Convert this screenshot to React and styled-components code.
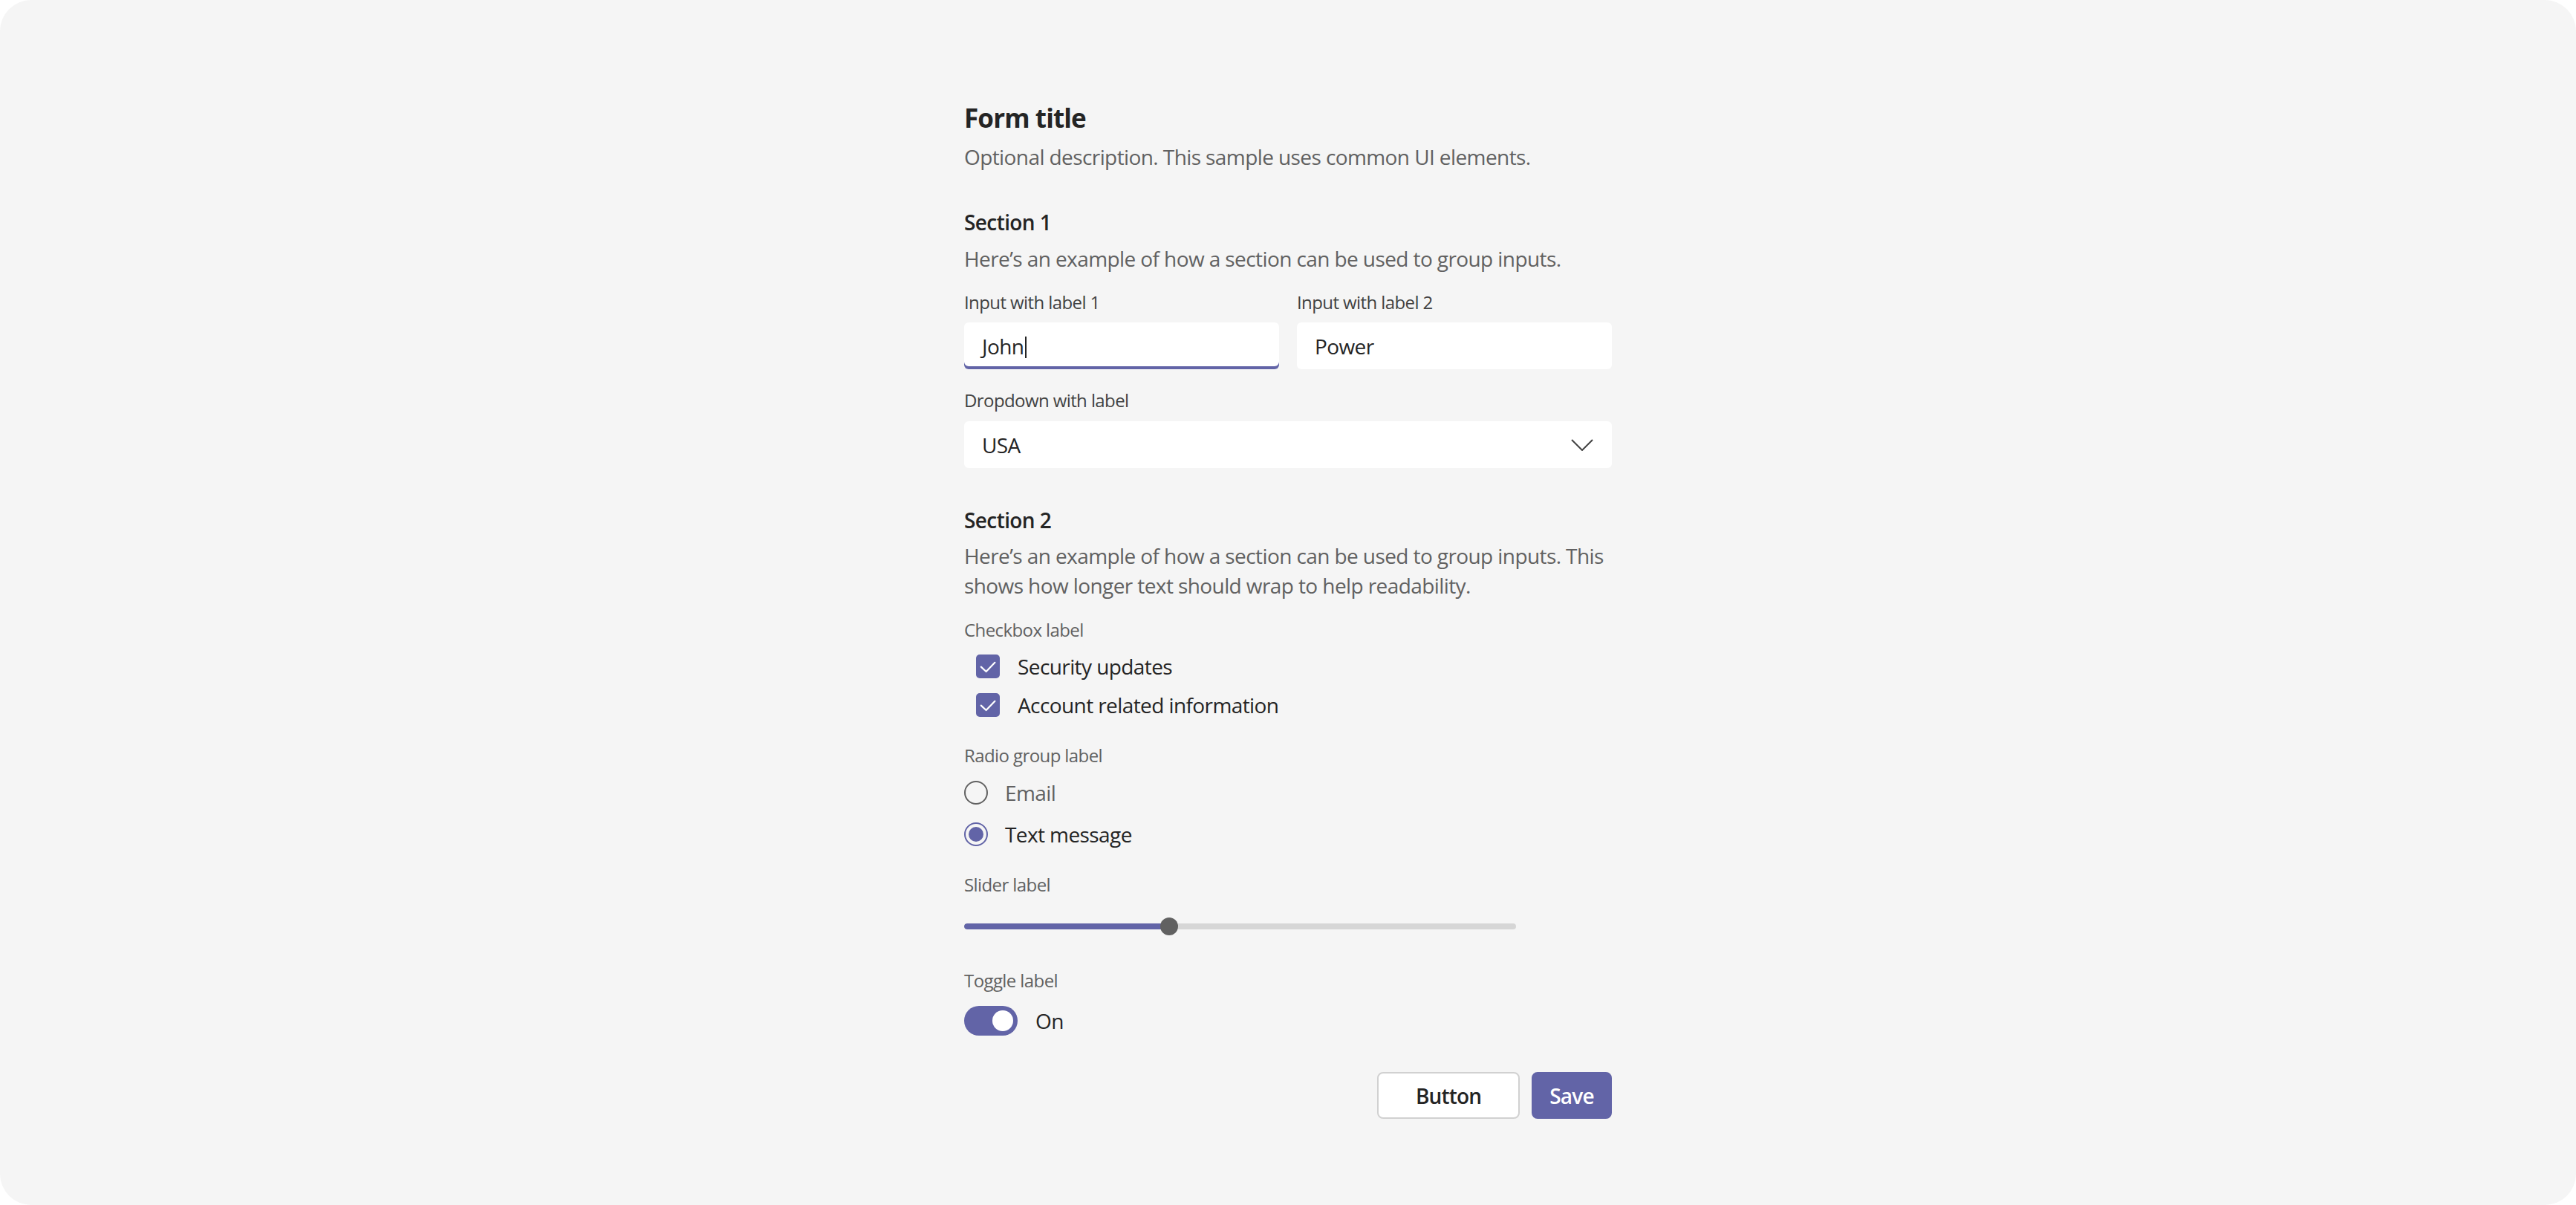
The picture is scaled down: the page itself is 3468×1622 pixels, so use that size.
import React from "react";
import styled, { createGlobalStyle } from "styled-components";

const GlobalStyle = createGlobalStyle`
  html, body { margin: 0; padding: 0; background: #ffffff; }
  body { font-family: "Segoe UI", "Open Sans", "Noto Sans", sans-serif; }
  *, *::before, *::after { box-sizing: border-box; }
`;

const PURPLE = "#6264a7";

const Page = styled.div`
  width: 100vw;
  height: 100vh;
  background: #ffffff;
`;

const Panel = styled.main`
  height: 100%;
  background: #f5f5f5;
  border-radius: 42px;
  display: flex;
  justify-content: center;
  padding-top: 135px;
`;

const Form = styled.form`
  width: 872px;
  display: flex;
  flex-direction: column;
  letter-spacing: -0.037em;
`;

const Title = styled.h1`
  margin: 0;
  font-size: 35px;
  line-height: 48px;
  font-weight: 700;
  color: #242424;
  letter-spacing: -0.025em;
`;

const Text = styled.p`
  margin: ${(p) => p.$mt || 0}px 0 0;
  font-size: 28px;
  line-height: 40px;
  color: #616161;
`;

const SectionTitle = styled.h2`
  margin: ${(p) => p.$mt || 0}px 0 0;
  font-size: 28px;
  line-height: 40px;
  font-weight: 600;
  color: #242424;
`;

const Group = styled.div`
  display: flex;
  flex-direction: column;
  margin-top: ${(p) => p.$mt || 0}px;
`;

const FieldRow = styled.div`
  display: grid;
  grid-template-columns: 1fr 1fr;
  column-gap: 24px;
  margin-top: ${(p) => p.$mt || 0}px;
`;

const Label = styled.label`
  display: block;
  font-size: 24px;
  line-height: 32px;
  color: ${(p) => (p.$muted ? "#616161" : "#424242")};
`;

const InputBox = styled.div`
  height: 63px;
  margin-top: ${(p) => p.$mt || 0}px;
  background: #ffffff;
  border-radius: 6px;
  padding: 0 25px 0 24px;
  display: flex;
  align-items: center;
  justify-content: space-between;
  font-size: 28px;
  color: #242424;
  box-shadow: ${(p) => (p.$focused ? `inset 0 -4px 0 ${PURPLE}` : "none")};
`;

const Caret = styled.span`
  display: inline-block;
  width: 2px;
  height: 29px;
  background: #242424;
  margin-left: 2px;
  vertical-align: -5px;
`;

const List = styled.div`
  display: flex;
  flex-direction: column;
  gap: ${(p) => p.$gap}px;
  margin-top: ${(p) => p.$mt}px;
`;

const OptionRow = styled.div`
  height: 40px;
  display: flex;
  align-items: center;
  gap: ${(p) => p.$gap || 24}px;
  padding-left: ${(p) => p.$indent || 0}px;
  font-size: 28px;
  color: ${(p) => (p.$dim ? "#616161" : "#242424")};
`;

const CheckBox = styled.span`
  width: 32px;
  height: 32px;
  border-radius: 5px;
  background: ${PURPLE};
  display: flex;
  align-items: center;
  justify-content: center;
  flex: none;
`;

const Radio = styled.span`
  width: 32px;
  height: 32px;
  border-radius: 50%;
  border: 2px solid ${(p) => (p.$checked ? PURPLE : "#616161")};
  display: flex;
  align-items: center;
  justify-content: center;
  flex: none;
  &::after {
    content: "";
    display: ${(p) => (p.$checked ? "block" : "none")};
    width: 20px;
    height: 20px;
    border-radius: 50%;
    background: ${PURPLE};
  }
`;

const SliderWrap = styled.div`
  position: relative;
  width: 743px;
  height: 40px;
  margin-top: 20px;
  display: flex;
  align-items: center;
`;

const Track = styled.div`
  width: 100%;
  height: 8px;
  border-radius: 4px;
  background: #d6d6d6;
  overflow: hidden;
`;

const Fill = styled.div`
  height: 100%;
  background: ${PURPLE};
  border-radius: 4px;
`;

const Thumb = styled.span`
  position: absolute;
  top: 8px;
  width: 24px;
  height: 24px;
  margin-left: -12px;
  border-radius: 50%;
  background: #616161;
`;

const ToggleRow = styled.div`
  display: flex;
  align-items: center;
  gap: 24px;
  height: 40px;
  margin-top: 18px;
  font-size: 28px;
  color: #242424;
`;

const Toggle = styled.span`
  width: 72px;
  height: 40px;
  border-radius: 20px;
  background: ${PURPLE};
  display: flex;
  align-items: center;
  justify-content: flex-end;
  padding: 0 6px;
`;

const Knob = styled.span`
  width: 28px;
  height: 28px;
  border-radius: 50%;
  background: #ffffff;
`;

const ButtonRow = styled.div`
  display: flex;
  justify-content: flex-end;
  gap: 16px;
  margin-top: 49px;
`;

const Button = styled.button`
  height: 63px;
  min-width: ${(p) => (p.$primary ? 108 : 192)}px;
  padding: 0 22px;
  border-radius: 8px;
  border: 2px solid ${(p) => (p.$primary ? PURPLE : "#d1d1d1")};
  background: ${(p) => (p.$primary ? PURPLE : "#ffffff")};
  color: ${(p) => (p.$primary ? "#ffffff" : "#242424")};
  font-family: inherit;
  font-size: 28px;
  font-weight: 600;
  letter-spacing: -0.03em;
`;

const CheckIcon = () => (
  <svg width="32" height="32" viewBox="0 0 16 16" fill="none">
    <path d="M3.4 8.3 L6.8 11.5 L12.7 5.4" stroke="#ffffff" strokeWidth="1.1" strokeLinecap="round" strokeLinejoin="round" />
  </svg>
);

const Chevron = () => (
  <svg width="30" height="16" viewBox="0 0 30 16" fill="none">
    <path d="M1 1 L15 15 L29 1" stroke="#424242" strokeWidth="2" />
  </svg>
);

export default function App() {
  const sliderValue = 37.2;
  return (
    <Page>
      <GlobalStyle />
      <Panel>
        <Form onSubmit={(e) => e.preventDefault()}>
          <Title>Form title</Title>
          <Text $mt={8}>Optional description. This sample uses common UI elements.</Text>

          <SectionTitle $mt={48}>Section 1</SectionTitle>
          <Text $mt={9}>Here’s an example of how a section can be used to group inputs.</Text>

          <FieldRow $mt={23}>
            <Group>
              <Label>Input with label 1</Label>
              <InputBox $mt={11} $focused>
                <span>
                  John<Caret />
                </span>
              </InputBox>
            </Group>
            <Group>
              <Label>Input with label 2</Label>
              <InputBox $mt={11}>
                <span>Power</span>
              </InputBox>
            </Group>
          </FieldRow>

          <Group $mt={26}>
            <Label>Dropdown with label</Label>
            <InputBox $mt={12}>
              <span>USA</span>
              <Chevron />
            </InputBox>
          </Group>

          <SectionTitle $mt={50}>Section 2</SectionTitle>
          <Text $mt={8}>
            Here’s an example of how a section can be used to group inputs. This shows how longer text should wrap to help readability.
          </Text>

          <Group $mt={24}>
            <Label $muted>Checkbox label</Label>
            <List $gap={12} $mt={13}>
              <OptionRow $indent={16}>
                <CheckBox><CheckIcon /></CheckBox>
                Security updates
              </OptionRow>
              <OptionRow $indent={16}>
                <CheckBox><CheckIcon /></CheckBox>
                Account related information
              </OptionRow>
            </List>
          </Group>

          <Group $mt={32}>
            <Label $muted>Radio group label</Label>
            <List $gap={16} $mt={14}>
              <OptionRow $gap={23} $dim>
                <Radio />
                Email
              </OptionRow>
              <OptionRow $gap={23}>
                <Radio $checked />
                Text message
              </OptionRow>
            </List>
          </Group>

          <Group $mt={32}>
            <Label $muted>Slider label</Label>
            <SliderWrap>
              <Track>
                <Fill style={{ width: `${sliderValue}%` }} />
              </Track>
              <Thumb style={{ left: `${sliderValue}%` }} />
            </SliderWrap>
          </Group>

          <Group $mt={37}>
            <Label $muted>Toggle label</Label>
            <ToggleRow>
              <Toggle><Knob /></Toggle>
              On
            </ToggleRow>
          </Group>

          <ButtonRow>
            <Button type="button">Button</Button>
            <Button type="button" $primary>Save</Button>
          </ButtonRow>
        </Form>
      </Panel>
    </Page>
  );
}
